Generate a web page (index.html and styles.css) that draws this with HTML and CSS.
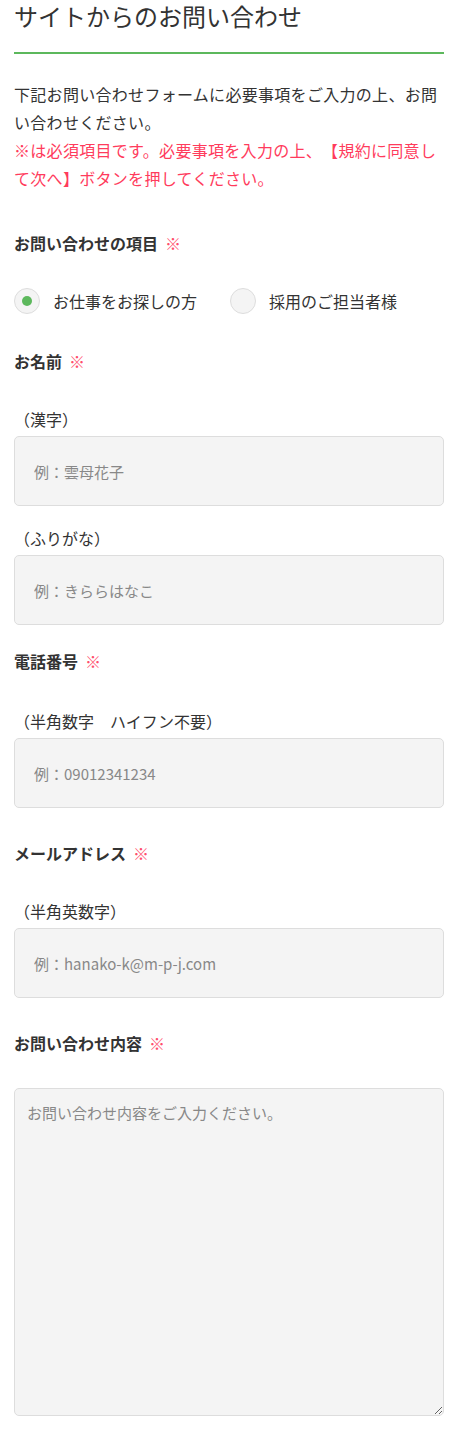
FILE: index.html
```html
<!DOCTYPE html>
<html lang="ja">
<head>
  <meta charset="UTF-8">
  <title>サイトからのお問い合わせ</title>
  <link rel="stylesheet" href="styles.css">
</head>
<body>
  <div class="contact">
    <h1 class="contact-title">サイトからのお問い合わせ</h1>

    <p class="lead">
      下記お問い合わせフォームに必要事項をご入力の上、お問い合わせください。<br>
      <span class="notice">※は必須項目です。必要事項を入力の上、【規約に同意して次へ】ボタンを押してください。</span>
    </p>

    <!-- お問い合わせの項目 -->
    <div class="field field-first">
      <div class="field-label">お問い合わせの項目<span class="req">※</span></div>
      <div class="radios">
        <label class="radio">
          <span class="radio-mark checked"></span>
          お仕事をお探しの方
        </label>
        <label class="radio">
          <span class="radio-mark"></span>
          採用のご担当者様
        </label>
      </div>
    </div>

    <!-- お名前 -->
    <div class="field">
      <div class="field-label">お名前<span class="req">※</span></div>
      <div class="sub-label">（漢字）</div>
      <input class="text-input" type="text" placeholder="例：雲母花子">
      <div class="sub-label">（ふりがな）</div>
      <input class="text-input" type="text" placeholder="例：きららはなこ">
    </div>

    <!-- 電話番号 -->
    <div class="field field-tel">
      <div class="field-label">電話番号<span class="req">※</span></div>
      <div class="sub-label">（半角数字　ハイフン不要）</div>
      <input class="text-input" type="tel" placeholder="例：09012341234">
    </div>

    <!-- メールアドレス -->
    <div class="field">
      <div class="field-label">メールアドレス<span class="req">※</span></div>
      <div class="sub-label">（半角英数字）</div>
      <input class="text-input" type="email" placeholder="例：hanako-k@m-p-j.com">
    </div>

    <!-- お問い合わせ内容 -->
    <div class="field">
      <div class="field-label">お問い合わせ内容<span class="req">※</span></div>
      <textarea class="text-area" placeholder="お問い合わせ内容をご入力ください。"></textarea>
    </div>
  </div>
</body>
</html>
```

FILE: styles.css
```css
body {
  margin: 0;
  background: #fff;
  color: #333;
  font-family: "Noto Sans CJK JP", "Noto Sans", sans-serif;
  text-spacing-trim: space-all;
}
.contact {
  padding: 0 12px 0 14px;
}
.contact-title {
  margin: 0;
  padding: 0 0 20px;
  font-size: 24px;
  font-weight: normal;
  line-height: 32px;
  border-bottom: 2px solid #5cb85c;
}
.lead {
  margin: 26px 0 0;
  font-size: 16px;
  line-height: 28px;
  letter-spacing: 0.3px;
}
.notice {
  color: #ff3b5c;
}
.field {
  margin-top: 30px;
}
.field-first {
  margin-top: 36px;
}
.field-tel {
  margin-top: 21px;
}
.field-tel .sub-label {
  margin-top: 33px;
}
.field-label {
  font-size: 16px;
  font-weight: bold;
  line-height: 30px;
}
.req {
  color: #ff4f6d;
  font-weight: normal;
  margin-left: 7px;
}
/* radio buttons */
.radios {
  display: flex;
  gap: 33px;
  margin-top: 28px;
}
.radio {
  display: flex;
  align-items: center;
  gap: 13px;
  font-size: 16px;
  line-height: 30px;
}
.radio-mark {
  width: 26px;
  height: 26px;
  box-sizing: border-box;
  border: 1px solid #ddd;
  border-radius: 50%;
  background: #f4f4f4;
  display: flex;
  align-items: center;
  justify-content: center;
}
.radio-mark.checked::after {
  content: "";
  width: 10px;
  height: 10px;
  border-radius: 50%;
  background: #5cb85c;
}
/* inputs */
.sub-label {
  margin-top: 31px;
  font-size: 16px;
  line-height: 24px;
}
.sub-label + .text-input {
  margin-top: 5px;
}
.text-input + .sub-label {
  margin-top: 20px;
}
.text-input,
.text-area {
  display: block;
  width: 100%;
  box-sizing: border-box;
  background: #f4f4f4;
  border: 1px solid #ddd;
  border-radius: 5px;
  font-family: inherit;
  font-size: 15px;
  color: #333;
}
.text-input {
  height: 70px;
  padding: 0 19px;
}
.text-area {
  margin-top: 30px;
  height: 328px;
  padding: 12px 12px;
  resize: vertical;
  line-height: 24px;
}
::placeholder {
  color: #888;
}
```
